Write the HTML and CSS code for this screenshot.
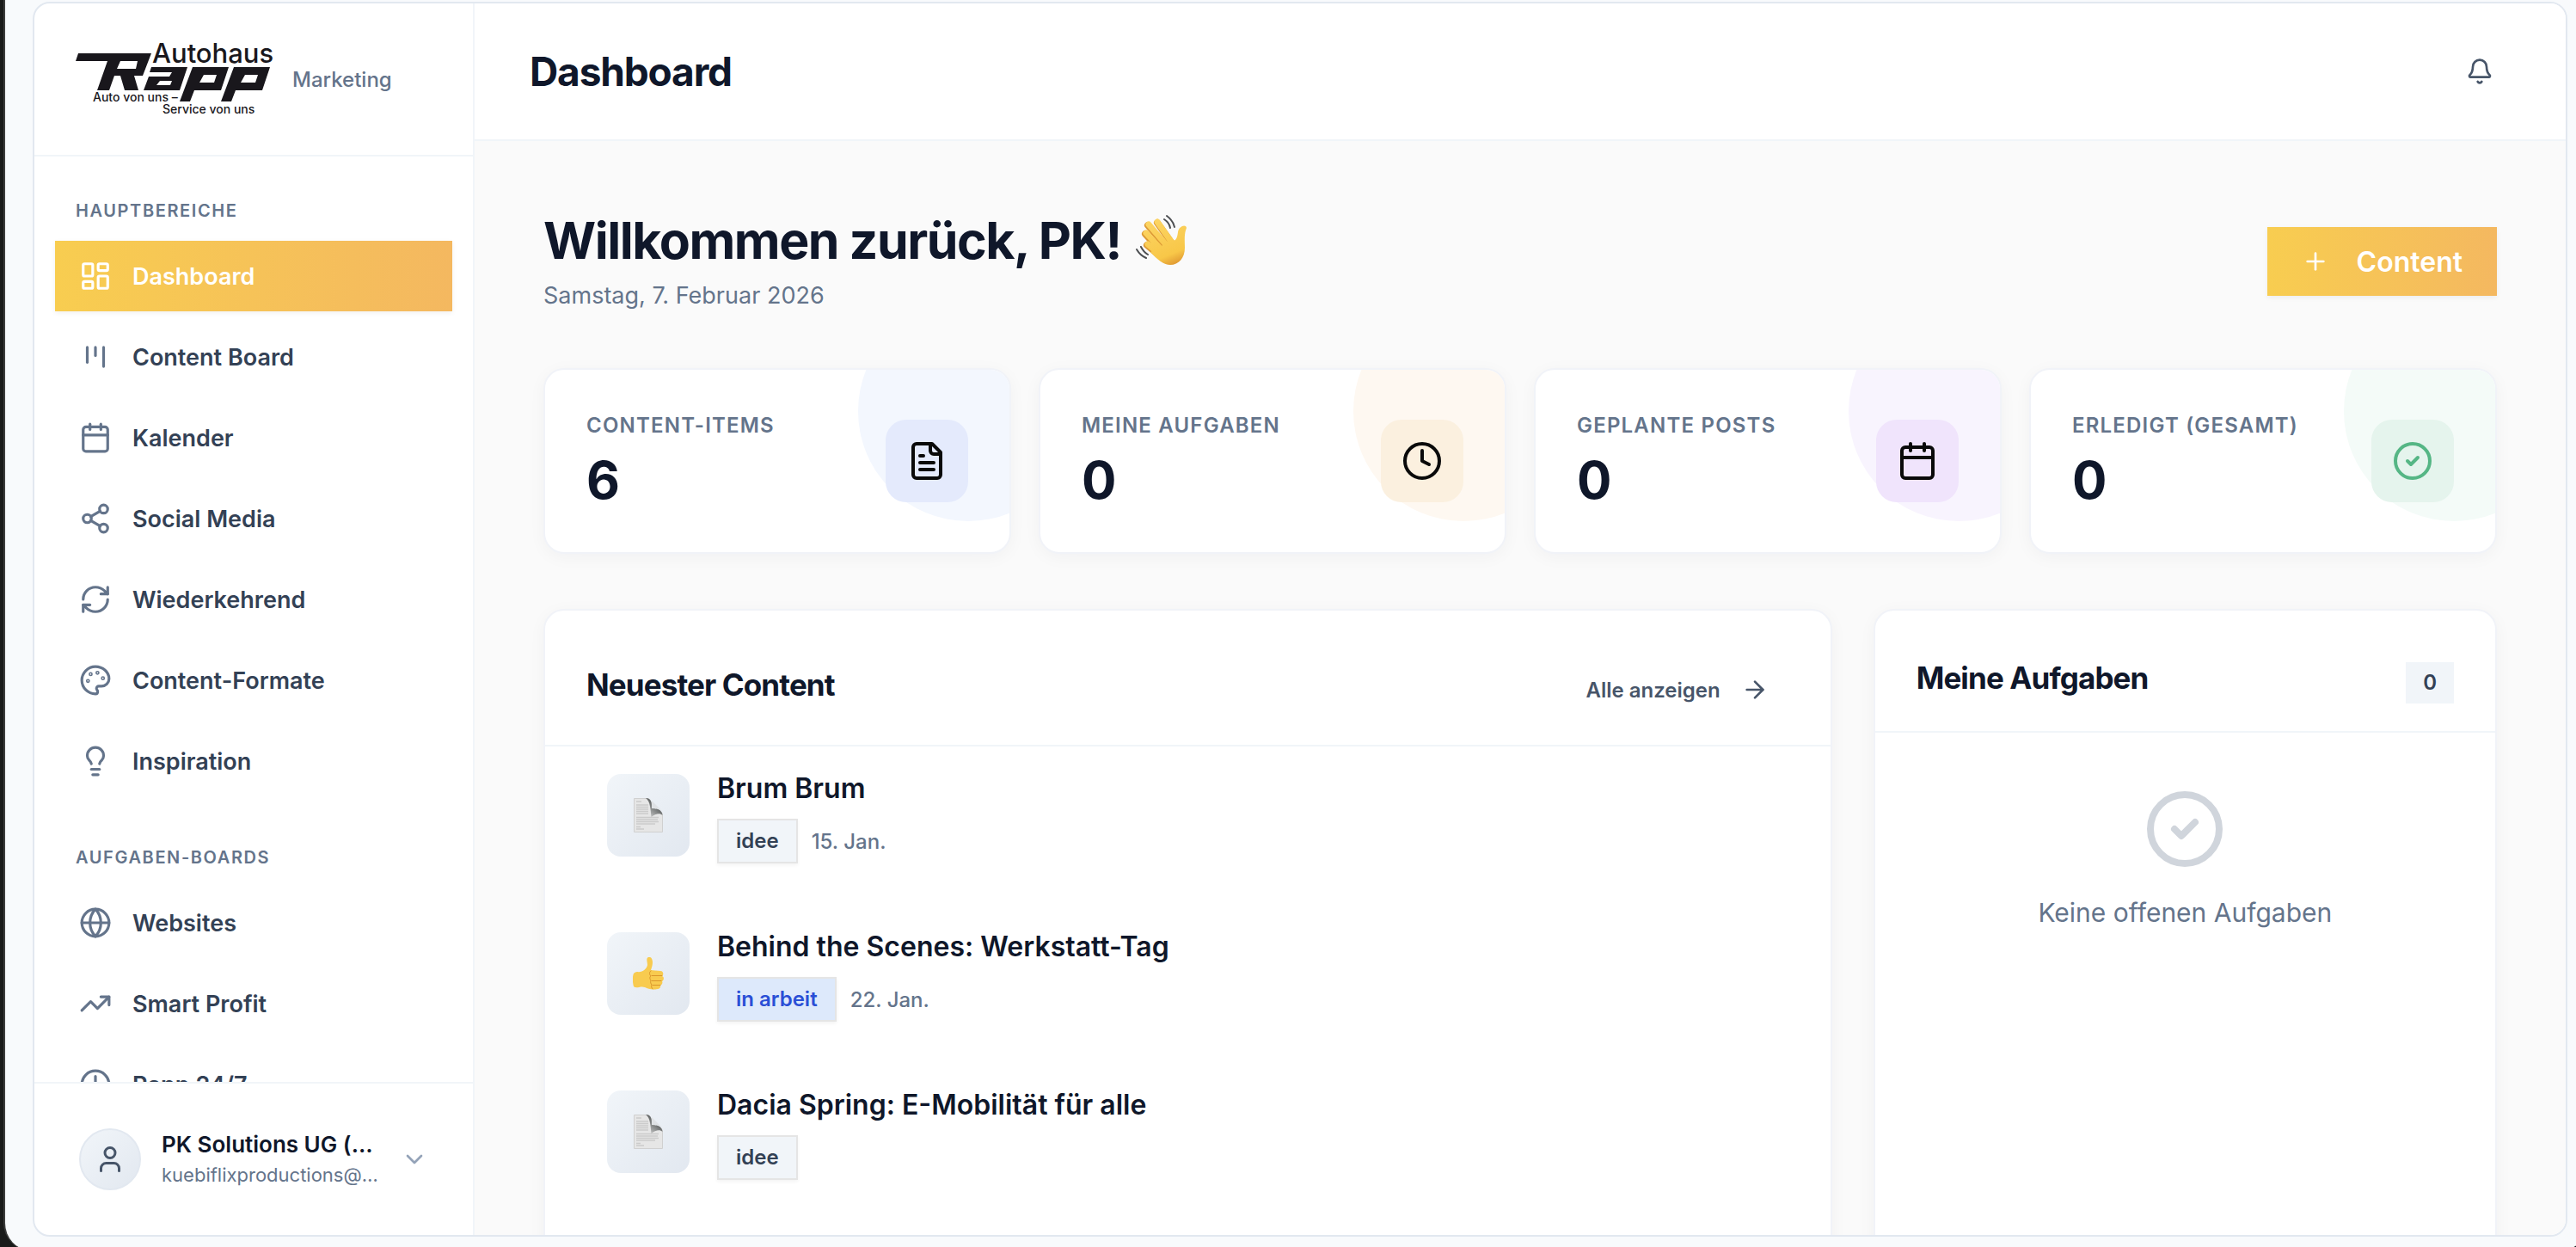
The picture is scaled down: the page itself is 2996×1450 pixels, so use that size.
FILE: index.html
```
<!DOCTYPE html>
<html lang="de">
  <head>
    <meta charset="utf-8"/>
    <title>Dashboard - Marketing</title>
    <link rel="stylesheet" href="styles.css">
  </head>
  <body>
    <!-- shared icons -->
    <svg class="sprite" width="0" height="0">
      <symbol id="i-dashboard" viewBox="0 0 24 24"><rect width="7" height="9" x="3" y="3" rx="1"/><rect width="7" height="5" x="14" y="3" rx="1"/><rect width="7" height="9" x="14" y="12" rx="1"/><rect width="7" height="5" x="3" y="16" rx="1"/></symbol>
      <symbol id="i-board" viewBox="0 0 24 24"><path d="M6 5v11"/><path d="M12 5v6"/><path d="M18 5v14"/></symbol>
      <symbol id="i-calendar" viewBox="0 0 24 24"><path d="M8 2v4"/><path d="M16 2v4"/><rect width="18" height="18" x="3" y="4" rx="2"/><path d="M3 10h18"/></symbol>
      <symbol id="i-share" viewBox="0 0 24 24"><circle cx="18" cy="5" r="3"/><circle cx="6" cy="12" r="3"/><circle cx="18" cy="19" r="3"/><path d="m8.59 13.51 6.83 3.98"/><path d="m15.41 6.51-6.82 3.98"/></symbol>
      <symbol id="i-refresh" viewBox="0 0 24 24"><path d="M3 12a9 9 0 0 1 9-9 9.75 9.75 0 0 1 6.74 2.74L21 8"/><path d="M21 3v5h-5"/><path d="M21 12a9 9 0 0 1-9 9 9.75 9.75 0 0 1-6.74-2.74L3 16"/><path d="M8 16H3v5"/></symbol>
      <symbol id="i-palette" viewBox="0 0 24 24"><circle cx="13.5" cy="6.5" r=".5"/><circle cx="17.5" cy="10.5" r=".5"/><circle cx="8.5" cy="7.5" r=".5"/><circle cx="6.5" cy="12.5" r=".5"/><path d="M12 2C6.5 2 2 6.5 2 12s4.5 10 10 10c.926 0 1.648-.746 1.648-1.688 0-.437-.18-.835-.437-1.125-.29-.289-.438-.652-.438-1.125a1.64 1.64 0 0 1 1.668-1.668h1.996c3.051 0 5.555-2.503 5.555-5.554C21.965 6.012 17.461 2 12 2z"/></symbol>
      <symbol id="i-bulb" viewBox="0 0 24 24"><path d="M15 14c.2-1 .7-1.7 1.5-2.5 1-.9 1.5-2.2 1.5-3.5A6 6 0 0 0 6 8c0 1 .2 2.2 1.5 3.5.7.7 1.3 1.5 1.5 2.5"/><path d="M9 18h6"/><path d="M10 22h4"/></symbol>
      <symbol id="i-globe" viewBox="0 0 24 24"><circle cx="12" cy="12" r="10"/><path d="M12 2a14.5 14.5 0 0 0 0 20 14.5 14.5 0 0 0 0-20"/><path d="M2 12h20"/></symbol>
      <symbol id="i-trend" viewBox="0 0 24 24"><path d="m22 7-8.500 8.500-5-5L2 17"/><path d="M16 7h6v6"/></symbol>
      <symbol id="i-clock" viewBox="0 0 24 24"><circle cx="12" cy="12" r="10"/><path d="M12 6v6l4 2"/></symbol>
      <symbol id="i-user" viewBox="0 0 24 24"><path d="M19 21v-2a4 4 0 0 0-4-4H9a4 4 0 0 0-4 4v2"/><circle cx="12" cy="7" r="4"/></symbol>
      <symbol id="i-down" viewBox="0 0 24 24"><path d="m6 9 6 6 6-6"/></symbol>
      <symbol id="i-bell" viewBox="0 0 24 24"><path d="M10.268 21a2 2 0 0 0 3.464 0"/><path d="M3.262 15.326A1 1 0 0 0 4 17h16a1 1 0 0 0 .74-1.673C19.410 13.956 18 12.499 18 8A6 6 0 0 0 6 8c0 4.499-1.411 5.956-2.738 7.326"/></symbol>
      <symbol id="i-plus" viewBox="0 0 24 24"><path d="M5 12h14"/><path d="M12 5v14"/></symbol>
      <symbol id="i-file" viewBox="0 0 24 24"><path d="M15 2H6a2 2 0 0 0-2 2v16a2 2 0 0 0 2 2h12a2 2 0 0 0 2-2V7Z"/><path d="M14 2v4a2 2 0 0 0 2 2h4"/><path d="M10 9H8"/><path d="M16 13H8"/><path d="M16 17H8"/></symbol>
      <symbol id="i-check" viewBox="0 0 24 24"><circle cx="12" cy="12" r="10"/><path d="m9 12 2 2 4-4"/></symbol>
      <symbol id="i-right" viewBox="0 0 24 24"><path d="M5 12h14"/><path d="m12 5 7 7-7 7"/></symbol>
      <linearGradient id="curl" x1="1" y1="0" x2=".2" y2="1">
        <stop offset="0" stop-color="#3f4343"/><stop offset=".5" stop-color="#6d7070"/><stop offset="1" stop-color="#c9caca"/>
      </linearGradient>
      <symbol id="e-page" viewBox="0 0 34 40">
        <path fill="#e6e6e6" stroke="#d0d0d0" d="M.5.5H16c4 1 5 5 5 12 7 0 12 2 12.500 7v20H.5z"/>
        <path stroke="#cbcbcb" stroke-width="1.500" d="M3 4h6M3 8h14M3 10.500h14M3 13h14M3 15.500h14M3 18h14M3 22.500h26M3 25h25M3 27.500h26M3 30h22M3 33.500h5M3 36h9"/>
        <path fill="url(#curl)" d="M14 0c7 0 7 6 7 12 7 0 12 2 12.500 8-3-3-8-2-13 2-1-9-1-18-6.500-22z"/>
        <path fill="#dfe2e5" d="M21 3l12 12c-4-3-8-3-12-3z"/>
      </symbol>
    </svg>

    <div class="window">
      <div class="panel">
        <aside class="sidebar">
          <div class="brand">
            <svg class="logo" viewBox="0 -5 230 92" role="img" aria-label="Autohaus Rapp">
              <g fill="#19171c" fill-rule="evenodd">
                <path d="M3 11H88L78 37H68L73 54H57L52 37H45L39 54H25L37 20H0zM52 20L48 29H70L72 20z"/>
                <path d="M88 27H130L121 54H79L85 38H109L112 33H86zM98 43L94 48H110L112 43z"/>
                <path d="M136 27H178L169 54H138L133 67H121zM149 36L144 45H161L164 36z"/>
                <path d="M184 27H226L217 54H186L181 67H169zM197 36L192 45H209L212 36z"/>
              </g>
              <text class="logo-name" x="89" y="22">Autohaus</text>
              <text class="logo-claim" x="20" y="67">Auto von uns –</text>
              <text class="logo-claim" x="101" y="81">Service von uns</text>
            </svg>
            <span class="brand-sub">Marketing</span>
          </div>

          <nav class="nav">
            <h2 class="nav-title">Hauptbereiche</h2>
            <ul class="nav-list">
              <li><a class="nav-link active" href="#"><svg class="icon"><use href="#i-dashboard"/></svg>Dashboard</a></li>
              <li><a class="nav-link" href="#"><svg class="icon"><use href="#i-board"/></svg>Content Board</a></li>
              <li><a class="nav-link" href="#"><svg class="icon"><use href="#i-calendar"/></svg>Kalender</a></li>
              <li><a class="nav-link" href="#"><svg class="icon"><use href="#i-share"/></svg>Social Media</a></li>
              <li><a class="nav-link" href="#"><svg class="icon"><use href="#i-refresh"/></svg>Wiederkehrend</a></li>
              <li><a class="nav-link" href="#"><svg class="icon"><use href="#i-palette"/></svg>Content-Formate</a></li>
              <li><a class="nav-link" href="#"><svg class="icon"><use href="#i-bulb"/></svg>Inspiration</a></li>
            </ul>
            <h2 class="nav-title">Aufgaben-Boards</h2>
            <ul class="nav-list">
              <li><a class="nav-link" href="#"><svg class="icon"><use href="#i-globe"/></svg>Websites</a></li>
              <li><a class="nav-link" href="#"><svg class="icon"><use href="#i-trend"/></svg>Smart Profit</a></li>
              <li><a class="nav-link" href="#"><svg class="icon"><use href="#i-clock"/></svg>Rapp 24/7</a></li>
            </ul>
          </nav>

          <button class="account" type="button">
            <span class="avatar"><svg class="icon"><use href="#i-user"/></svg></span>
            <span class="account-text">
              <span class="account-name">PK Solutions UG (haftungsbeschränkt)</span>
              <span class="account-mail">kuebiflixproductions@gmail.com</span>
            </span>
            <svg class="icon chevron"><use href="#i-down"/></svg>
          </button>
        </aside>

        <div class="main">
          <header class="topbar">
            <h1 class="page-title">Dashboard</h1>
            <button class="bell" type="button" aria-label="Benachrichtigungen"><svg class="icon"><use href="#i-bell"/></svg></button>
          </header>

          <main class="content">
            <div class="welcome">
              <div>
                <h2 class="greeting">Willkommen zurück, PK!
                  <svg class="wave" viewBox="15 13 62 62" aria-hidden="true">
                    <defs>
                      <linearGradient id="skin" gradientUnits="userSpaceOnUse" x1="40" y1="20" x2="62" y2="73">
                        <stop offset="0" stop-color="#fcd462"/><stop offset=".75" stop-color="#f8c748"/><stop offset="1" stop-color="#dd9430"/>
                      </linearGradient>
                    </defs>
                    <g fill="none" stroke="#dd9a35" stroke-width="8" stroke-linecap="round">
                      <path d="M41 23l17 24M30 26l24 28M27 36l22 24M29 49l18 15"/>
                    </g>
                    <g fill="none" stroke="url(#skin)" stroke-width="7" stroke-linecap="round">
                      <path d="M41 22l17 24M31 25l24 28M28 35l22 24M30 48l18 15"/>
                    </g>
                    <path fill="url(#skin)" d="M46 50l10-8c6 4 8 0 9-8 1-7 9-10 10-5-3 7-2 14-2 23 0 12-7 20-17 20-7 0-15-6-23-15z"/>
                    <path fill="none" stroke="#4d4f52" stroke-width="2" stroke-linecap="round" d="M49 19q6 4 7 10M52 15q7 5 9 13M22 51q3 6 8 9M17 54q4 7 11 10"/>
                  </svg>
                </h2>
                <p class="date">Samstag, 7. Februar 2026</p>
              </div>
              <button class="btn-primary" type="button"><svg class="icon"><use href="#i-plus"/></svg>Content</button>
            </div>

            <section class="stats">
              <article class="stat blue">
                <div><h3 class="stat-label">Content-Items</h3><p class="stat-value">6</p></div>
                <span class="stat-icon"><svg class="icon"><use href="#i-file"/></svg></span>
              </article>
              <article class="stat orange">
                <div><h3 class="stat-label">Meine Aufgaben</h3><p class="stat-value">0</p></div>
                <span class="stat-icon"><svg class="icon"><use href="#i-clock"/></svg></span>
              </article>
              <article class="stat purple">
                <div><h3 class="stat-label">Geplante Posts</h3><p class="stat-value">0</p></div>
                <span class="stat-icon"><svg class="icon"><use href="#i-calendar"/></svg></span>
              </article>
              <article class="stat green">
                <div><h3 class="stat-label">Erledigt (gesamt)</h3><p class="stat-value">0</p></div>
                <span class="stat-icon"><svg class="icon"><use href="#i-check"/></svg></span>
              </article>
            </section>

            <div class="columns">
              <section class="card">
                <div class="card-head">
                  <h3 class="card-title">Neuester Content</h3>
                  <a class="more" href="#">Alle anzeigen<svg class="icon"><use href="#i-right"/></svg></a>
                </div>
                <ul class="items">
                  <li class="item">
                    <span class="thumb"><svg class="page" aria-hidden="true"><use href="#e-page"/></svg></span>
                    <div>
                      <h4 class="item-title">Brum Brum</h4>
                      <p class="meta"><span class="badge">idee</span>15. Jan.</p>
                    </div>
                  </li>
                  <li class="item">
                    <span class="thumb">
                      <svg class="like" viewBox="0 0 36 38" aria-hidden="true">
                        <path fill="#f8cb4f" d="M1 19c1-1 2-2 4-2 6 1 11-3 12-8 0-3-2-8 1-9 3-1 5 2 5 6 0 3-1 6-2 9l11 1c4 0 4 5 2 6 3 1 2 5 0 6 1 2 0 4-2 5 1 2-1 4-3 4-7 1-11 0-15-2-5-2-10 2-13-1-1-3-2-11 0-15z"/>
                        <path fill="none" stroke="#d9952b" stroke-linecap="round" d="M21 16c-2 1-2 4 0 6-2 1-1 4 0 5-1 2 0 4 1 5-1 2 0 4 1 5M22 21.500h12M22 27.500h11M23 32.500h9"/>
                      </svg>
                    </span>
                    <div>
                      <h4 class="item-title">Behind the Scenes: Werkstatt-Tag</h4>
                      <p class="meta"><span class="badge progress">in arbeit</span>22. Jan.</p>
                    </div>
                  </li>
                  <li class="item">
                    <span class="thumb"><svg class="page" aria-hidden="true"><use href="#e-page"/></svg></span>
                    <div>
                      <h4 class="item-title">Dacia Spring: E-Mobilität für alle</h4>
                      <p class="meta"><span class="badge">idee</span></p>
                    </div>
                  </li>
                </ul>
              </section>

              <section class="card">
                <div class="card-head">
                  <h3 class="card-title">Meine Aufgaben</h3>
                  <span class="count">0</span>
                </div>
                <div class="empty">
                  <svg class="icon"><use href="#i-check"/></svg>
                  <p class="empty-text">Keine offenen Aufgaben</p>
                </div>
              </section>
            </div>
          </main>
        </div>
      </div>
    </div>
  </body>
</html>
```
FILE: styles.css
```
* {
  box-sizing: border-box;
}
body {
  margin: 0;
  height: 100vh;
  overflow: hidden;
  background: #1a1b1a;
  color: #0f172a;
  font-family: Inter, "Liberation Sans", sans-serif;
  font-size: 24px;
}
h1, h2, h3, h4, p, ul {
  margin: 0;
  padding: 0;
}
ul {
  list-style: none;
}
a {
  color: inherit;
  text-decoration: none;
}
button {
  border: 0;
  background: none;
  color: inherit;
  font-family: inherit;
  cursor: pointer;
}
.sprite {
  position: absolute;
}
.icon {
  flex: none;
  width: 32px;
  height: 32px;
  fill: none;
  stroke: currentColor;
  stroke-width: 2;
  stroke-linecap: round;
  stroke-linejoin: round;
}

/* window frame, runs a little past the right and bottom edge */
.window {
  height: calc(100vh + 4px);
  margin: 0 -14px 0 4px;
  padding: 2px 24px 16px 32px;
  border-left: 2px solid #3c3d3c;
  border-radius: 0 0 32px 32px;
  background: #f8fafc;
}
.panel {
  display: flex;
  height: 100%;
  border: 2px solid #e2e8f0;
  border-radius: 20px;
  background: #fff;
  overflow: hidden;
}

/* sidebar */
.sidebar {
  display: flex;
  flex-direction: column;
  flex: none;
  width: 512px;
  border-right: 2px solid #f1f5f9;
}
.brand {
  display: flex;
  align-items: center;
  gap: 22px;
  flex: none;
  height: 178px;
  padding: 0 48px;
  border-bottom: 2px solid #f1f5f9;
}
.logo {
  width: 230px;
  height: 92px;
  overflow: visible;
}
.logo text {
  fill: #19171c;
  font-family: Inter, sans-serif;
}
.logo-name {
  font-size: 31px;
  font-weight: 500;
}
.logo-claim {
  font-size: 14px;
  font-weight: 500;
}
.brand-sub {
  color: #64748b;
  font-weight: 500;
}
.nav {
  flex: 1;
  min-height: 0;
  padding: 48px 24px 0;
  overflow: hidden;
}
.nav-title {
  padding: 0 24px;
  margin-bottom: 20px;
  color: #64748b;
  font-size: 20px;
  font-weight: 600;
  line-height: 30px;
  letter-spacing: 0.08em;
  text-transform: uppercase;
}
.nav-list {
  display: flex;
  flex-direction: column;
  gap: 12px;
  margin-bottom: 56px;
}
.nav-link {
  display: flex;
  align-items: center;
  gap: 24px;
  height: 82px;
  padding: 0 28px;
  color: #334155;
  font-size: 27px;
  font-weight: 600;
}
.nav-link .icon {
  width: 38px;
  height: 38px;
  color: #64748b;
}
.nav-link.active, .nav-link.active .icon {
  color: #fff;
}
.nav-link.active, .btn-primary {
  background: linear-gradient(90deg, #f8cd50, #f4b860);
  box-shadow: 0 2px 6px rgba(0, 0, 0, .06);
}
.account {
  display: flex;
  align-items: center;
  gap: 24px;
  flex: none;
  height: 178px;
  padding: 0 52px;
  border-top: 2px solid #f1f5f9;
  text-align: left;
}
.avatar {
  display: flex;
  align-items: center;
  justify-content: center;
  flex: none;
  width: 72px;
  height: 72px;
  border: 2px solid #e2e8f0;
  border-radius: 50%;
  background: linear-gradient(135deg, #f1f5f9, #e2e8f0);
  color: #475569;
}
.avatar .icon {
  width: 36px;
  height: 36px;
}
.account-text {
  flex: 1;
  min-width: 0;
}
.account-name, .account-mail {
  display: block;
  overflow: hidden;
  text-overflow: ellipsis;
  white-space: nowrap;
}
.account-name {
  font-size: 26px;
  font-weight: 600;
  line-height: 36px;
}
.account-mail {
  color: #64748b;
  font-size: 22px;
  line-height: 34px;
}
.chevron {
  color: #94a3b8;
}

/* main area */
.main {
  display: flex;
  flex-direction: column;
  flex: 1;
  min-width: 0;
  background: #fafafa;
}
.topbar {
  display: flex;
  align-items: center;
  justify-content: space-between;
  flex: none;
  height: 160px;
  padding: 0 64px;
  border-bottom: 2px solid #f1f5f9;
  background: #fff;
}
.page-title {
  font-size: 46px;
  font-weight: 700;
  letter-spacing: -0.025em;
}
.bell {
  display: flex;
  padding: 20px;
  color: #475569;
}
.content {
  flex: 1;
  min-height: 0;
  padding: 80px;
  overflow: hidden;
}
.welcome {
  display: flex;
  align-items: center;
  justify-content: space-between;
  height: 120px;
  margin-bottom: 64px;
}
.greeting {
  display: flex;
  align-items: center;
  gap: 16px;
  font-size: 59px;
  font-weight: 700;
  line-height: 72px;
  letter-spacing: -0.025em;
}
.wave {
  width: 62px;
  height: 62px;
}
.date {
  margin-top: 8px;
  color: #64748b;
  font-size: 27px;
  line-height: 40px;
}
.btn-primary {
  display: flex;
  align-items: center;
  gap: 32px;
  height: 80px;
  padding: 0 40px;
  color: #fff;
  font-size: 32px;
  font-weight: 600;
}

/* stat cards */
.stats {
  display: grid;
  grid-template-columns: repeat(4, 1fr);
  gap: 32px;
  margin-bottom: 64px;
}
.stat, .card {
  border: 2px solid #f1f3f8;
  border-radius: 24px;
  background: #fff;
  box-shadow: 0 4px 20px rgba(15, 23, 42, .04);
}
.stat {
  display: flex;
  align-items: center;
  justify-content: space-between;
  position: relative;
  padding: 48px;
  overflow: hidden;
}
.stat::before {
  content: "";
  position: absolute;
  top: -80px;
  right: -80px;
  width: 256px;
  height: 256px;
  border-radius: 50%;
}
.stat-label {
  margin-bottom: 10px;
  color: #64748b;
  font-size: 24px;
  font-weight: 600;
  line-height: 34px;
  letter-spacing: 0.05em;
  text-transform: uppercase;
}
.stat-value {
  font-size: 60px;
  font-weight: 700;
  line-height: 72px;
}
.stat-icon {
  display: flex;
  align-items: center;
  justify-content: center;
  position: relative;
  width: 96px;
  height: 96px;
  border-radius: 24px;
  color: #0a0a0a;
}
.stat-icon .icon {
  width: 48px;
  height: 48px;
}
.blue::before { background: #f3f7fe; }
.blue .stat-icon { background: #e4eafc; }
.orange::before { background: #fef8f1; }
.orange .stat-icon { background: #fbf0df; }
.purple::before { background: #f8f4fe; }
.purple .stat-icon { background: #f0e4fc; }
.green::before { background: #f4fbf8; }
.green .stat-icon { background: #e5f4ed; color: #55b685; }

/* lower cards */
.columns {
  display: grid;
  grid-template-columns: repeat(3, 1fr);
  gap: 48px;
}
.card {
  min-height: 1000px;
}
.card:first-child {
  grid-column: span 2;
}
.card-head {
  display: flex;
  align-items: center;
  justify-content: space-between;
  padding: 48px 48px 32px;
  border-bottom: 2px solid #f1f5f9;
}
.card-title {
  font-size: 35px;
  font-weight: 700;
  line-height: 60px;
  letter-spacing: -0.025em;
}
.more {
  display: flex;
  align-items: center;
  gap: 24px;
  height: 64px;
  margin-top: 12px;
  padding: 0 24px;
  color: #475569;
  font-weight: 600;
}
.count {
  margin-top: 12px;
  padding: 0 20px;
  background: #f1f5f9;
  color: #334155;
  font-weight: 600;
  line-height: 48px;
}
.items {
  display: flex;
  flex-direction: column;
  gap: 16px;
  padding: 0 40px;
}
.item {
  display: flex;
  gap: 32px;
  padding: 32px;
}
.thumb {
  display: flex;
  align-items: center;
  justify-content: center;
  width: 96px;
  height: 96px;
  border-radius: 16px;
  background: linear-gradient(135deg, #f1f5f9, #e2e8f0);
}
.page {
  width: 34px;
  height: 40px;
}
.like {
  width: 36px;
  height: 38px;
}
.item-title {
  margin-bottom: 18px;
  font-size: 32px;
  font-weight: 600;
  line-height: 34px;
}
.meta {
  display: flex;
  align-items: center;
  gap: 16px;
  color: #64748b;
  font-weight: 500;
}
.badge {
  padding: 0 20px;
  border: 2px solid #e5e5e5;
  background: #f1f5f9;
  box-shadow: 0 2px 4px rgba(0, 0, 0, .05);
  color: #334155;
  font-weight: 600;
  line-height: 48px;
}
.badge.progress {
  background: #dde9fb;
  color: #2a4fd6;
}
.empty {
  display: flex;
  flex-direction: column;
  align-items: center;
  gap: 24px;
  padding: 64px 48px;
}
.empty .icon {
  width: 96px;
  height: 96px;
  color: #d0d5dc;
}
.empty-text {
  color: #64748b;
  font-size: 30px;
  line-height: 50px;
}
```
